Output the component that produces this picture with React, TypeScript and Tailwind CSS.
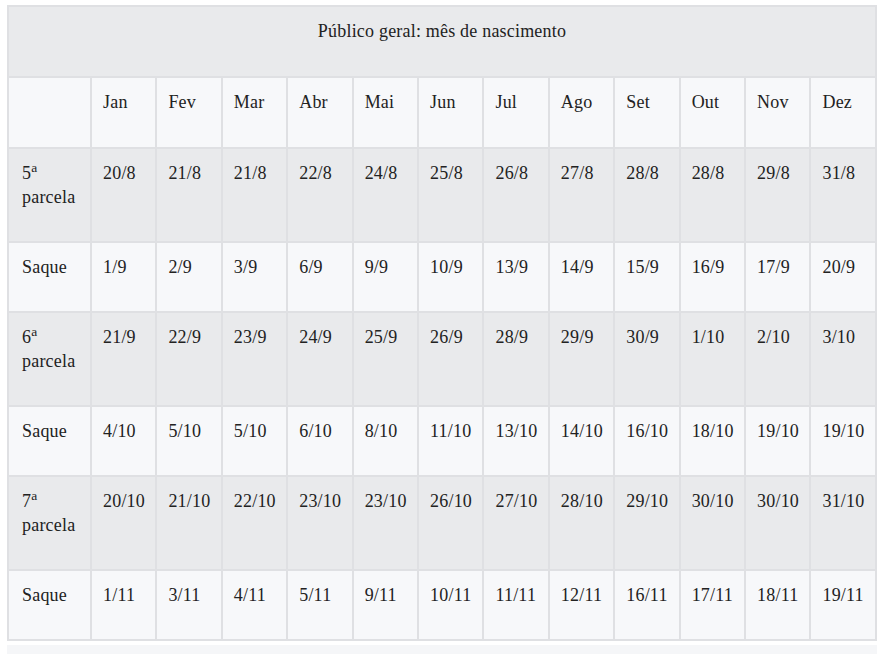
const months = ['Jan', 'Fev', 'Mar', 'Abr', 'Mai', 'Jun', 'Jul', 'Ago', 'Set', 'Out', 'Nov', 'Dez']

interface Row {
  label: string
  sup?: string
  dates: string[]
}

const rows: Row[] = [
  { label: '5', sup: 'a', dates: ['20/8', '21/8', '21/8', '22/8', '24/8', '25/8', '26/8', '27/8', '28/8', '28/8', '29/8', '31/8'] },
  { label: 'Saque', dates: ['1/9', '2/9', '3/9', '6/9', '9/9', '10/9', '13/9', '14/9', '15/9', '16/9', '17/9', '20/9'] },
  { label: '6', sup: 'a', dates: ['21/9', '22/9', '23/9', '24/9', '25/9', '26/9', '28/9', '29/9', '30/9', '1/10', '2/10', '3/10'] },
  { label: 'Saque', dates: ['4/10', '5/10', '5/10', '6/10', '8/10', '11/10', '13/10', '14/10', '16/10', '18/10', '19/10', '19/10'] },
  { label: '7', sup: 'a', dates: ['20/10', '21/10', '22/10', '23/10', '23/10', '26/10', '27/10', '28/10', '29/10', '30/10', '30/10', '31/10'] },
  { label: 'Saque', dates: ['1/11', '3/11', '4/11', '5/11', '9/11', '10/11', '11/11', '12/11', '16/11', '17/11', '18/11', '19/11'] },
]

const cell = 'border-2 border-[#dfe0e3] align-top pt-[12px] px-[11px] font-normal'

export default function App() {
  return (
    <div className="min-h-screen bg-white pt-[5px] px-[7px] text-[18px] leading-[24px] tracking-[0.2px] text-[#222] [font-family:'Liberation_Serif',serif]">
      <table className="w-[870px] border-collapse table-fixed">
        <colgroup>
          <col className="w-[83px]" />
          {months.map((m) => (
            <col key={m} />
          ))}
        </colgroup>
        <thead>
          <tr className="h-[71px] bg-[#e9eaec]">
            <th colSpan={13} className={`${cell} text-center`}>
              Público geral: mês de nascimento
            </th>
          </tr>
        </thead>
        <tbody>
          <tr className="h-[71px] bg-[#f7f8fa]">
            <td className={cell}></td>
            {months.map((m) => (
              <td key={m} className={cell}>
                {m}
              </td>
            ))}
          </tr>
          {rows.map((row, i) => (
            <tr key={i} className={row.sup ? 'h-[94px] bg-[#e9eaec]' : 'h-[70px] bg-[#f7f8fa]'}>
              <td className={`${cell} pl-[13px]`}>
                {row.sup ? (
                  <>
                    {row.label}
                    <sup>{row.sup}</sup>
                    <br />
                    parcela
                  </>
                ) : (
                  row.label
                )}
              </td>
              {row.dates.map((d, j) => (
                <td key={j} className={cell}>
                  {d}
                </td>
              ))}
            </tr>
          ))}
        </tbody>
      </table>
      <div className="mt-[4px] h-[12px] w-[870px] bg-[#f5f6f8]" />
    </div>
  )
}
